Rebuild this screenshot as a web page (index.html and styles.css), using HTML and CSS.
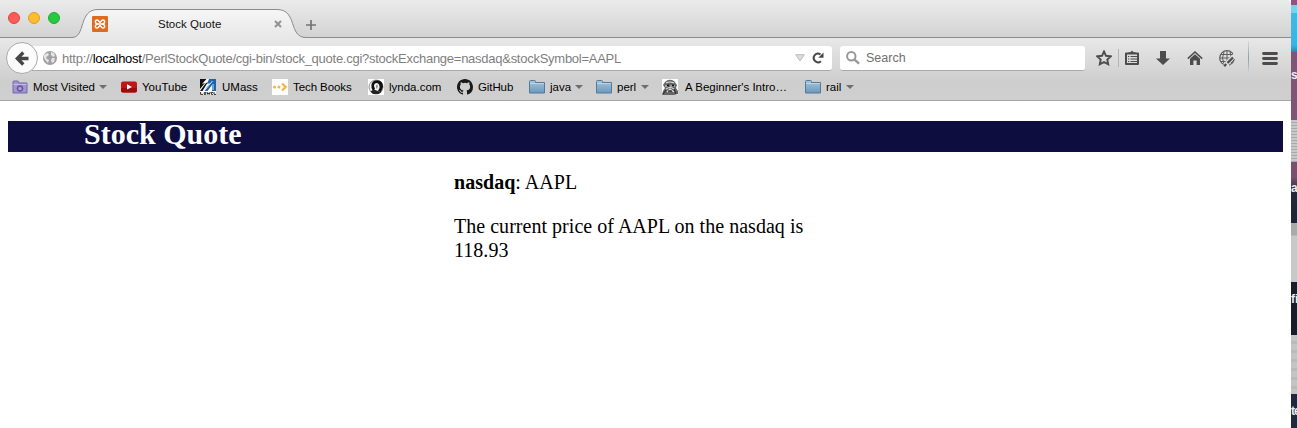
FILE: index.html
```html
<!DOCTYPE html>
<html lang="en">
<head>
<meta charset="utf-8">
<title>Stock Quote</title>
<link rel="stylesheet" href="styles.css">
</head>
<body>
<div class="screen">
<div class="window">
  <header class="tabstrip">
    <div class="lights"><i class="light red"></i><i class="light yellow"></i><i class="light green"></i></div>
    <div class="tab">
      <svg class="tab-shape" width="240" height="30" viewBox="0 0 240 30"><defs><linearGradient id="tg" x2="0" y2="1"><stop stop-color="#f6f6f6"/><stop offset="1" stop-color="#e7e7e7"/></linearGradient></defs><path d="M0 28.5C14 28.5 6 .5 26 .5H205C226 .5 216 28.5 234 28.5V30H0Z" fill="url(#tg)"/><path d="M0 28.5C14 28.5 6 .5 26 .5H205C226 .5 216 28.5 234 28.5" fill="none" stroke="#8c8c8c"/></svg>
      <svg class="favicon" width="16" height="16" viewBox="0 0 16 16"><rect width="16" height="16" rx="1" fill="#df6b20"/><path d="M6.200 8H9.800M6.200 8C2.500 8 2.700 4 5 4 7 4 6.800 6.200 8 6.200S9 4 11 4C13.300 4 13.500 8 9.800 8M6.200 8C2.500 8 2.700 12 5 12 7 12 6.800 9.800 8 9.800S9 12 11 12C13.300 12 13.500 8 9.800 8" fill="none" stroke="#fff" stroke-width="1.500"/></svg>
      <span class="tab-title">Stock Quote</span>
      <svg class="close" width="8" height="8" viewBox="0 0 8 8"><path d="M1 1l6 6M7 1L1 7" stroke="#929292" stroke-width="2"/></svg>
    </div>
    <svg class="plus" width="10" height="10" viewBox="0 0 10 10"><path d="M5 0v10M0 5h10" stroke="#747474" stroke-width="1.7"/></svg>
  </header>
  <div class="toolbars">
    <nav class="navbar">
      <button class="back" aria-label="Back"><svg width="14" height="15" viewBox="0 0 14 15"><path d="M13.5 7.5H2M8.3 1.5l-6 6 6 6" fill="none" stroke="#464646" stroke-width="3.3"/></svg></button>
      <div class="urlbar">
        <svg class="globe" width="14" height="14" viewBox="0 0 14 14"><circle cx="7" cy="7" r="7" fill="#a1a1a1"/><path d="M1 4l3-2 2 1-1 2-2 1 1 2 2 1-1 3-2-2-2-3ZM8 1l3 1 1 3-2 1-2-2ZM9 7l3 0-1 4-2 1-1-3Z" fill="#e5e5e5"/></svg>
        <span class="url">http://<b>localhost</b>/PerlStockQuote/cgi-bin/stock_quote.cgi?stockExchange=nasdaq&amp;stockSymbol=AAPL</span>
        <svg class="drop" width="10" height="8" viewBox="0 0 10 8"><path d="M.7.7h8.6L5 7Z" fill="#ddd" stroke="#bbb"/></svg>
        <svg class="reload" width="12" height="12" viewBox="0 0 12 12"><path d="M8.500 2.400A4.300 4.300 0 1 0 8.900 9.200" fill="none" stroke="#474747" stroke-width="2"/><path d="M11.500 .5v5.200H6.300Z" fill="#474747"/></svg>
      </div>
      <div class="search"><svg width="14" height="14" viewBox="0 0 14 14"><circle cx="5.3" cy="5.3" r="4.2" fill="none" stroke="#989898" stroke-width="2"/><path d="M8.3 8.3l4.7 4.4" stroke="#989898" stroke-width="2.4"/></svg><span>Search</span></div>
      <div class="tools">
        <svg width="16" height="16" viewBox="0 0 16 16"><path d="M8 1.500l2 4.300 4.800.6-3.500 3.200.9 4.700L8 12l-4.200 2.300.9-4.700L1.200 6.400 6 5.800Z" fill="none" stroke="#4c4c4c" stroke-width="1.900"/></svg>
        <i class="sep-small"></i>
        <svg width="14" height="16" viewBox="0 0 14 16"><path d="M1 3.5h12V14H1Z" fill="none" stroke="#4c4c4c" stroke-width="2" stroke-linejoin="round"/><path d="M3.5 4V2.200H5.500L7 .5l1.500 1.700h2V4Z" fill="#4c4c4c"/><path d="M3 6.500h1.300M5.500 6.500H12M3 9h1.300M5.500 9H12M3 11.500h1.300M5.500 11.500H12" stroke="#4c4c4c" stroke-width="1.100"/></svg>
        <svg class="download" width="14" height="14" viewBox="0 0 14 14"><path d="M4 0h6v7.500H14L7 14 0 7.500h4Z" fill="#4c4c4c"/></svg>
        <svg class="home" width="16" height="14" viewBox="0 0 16 14"><path d="M.8 7.600L8 1l7.200 6.600" fill="none" stroke="#4c4c4c" stroke-width="1.500"/><path d="M8 3.300l5 4.500V14H9.600V9.500H6.400V14H3V7.800Z" fill="#4c4c4c"/></svg>
        <svg class="web" width="17" height="17" viewBox="0 0 17 17"><circle cx="8" cy="8" r="7.300" fill="none" stroke="#5d5d5d" stroke-width="1.200"/><path d="M8 1v14M1 8h14M2 4.500h12M2 11.500h12M5 2q-3 6 0 12M11 2q3 6 0 12" fill="none" stroke="#5d5d5d"/><path d="M16.500 5.500L6 16" stroke="#ddd" stroke-width="5.500"/><path d="M14 7.500L8.500 13M7.200 14l-2 2.200" stroke="#4c4c4c" stroke-width="2.300"/><path d="M15.500 9Q14.500 13 10 15.200M15 10l-3 3" fill="none" stroke="#5d5d5d"/></svg>
        <i class="sep-tall"></i>
        <svg class="menu" width="16" height="13" viewBox="0 0 16 13"><path d="M1.500 1.500h13M1.500 6.500h13M1.500 11.500h13" stroke="#4c4c4c" stroke-width="2.800" stroke-linecap="round"/></svg>
      </div>
    </nav>
    <div class="bookmarks">
      <span class="bm"><svg class="ic" viewBox="0 0 16 16"><path d="M1 3q0-1 1-1h4l1 2h8v10H1Z" fill="#a294cf" stroke="#7768ac"/><path d="M1.500 5.500h13" stroke="#c7bce8"/><circle cx="8" cy="9.500" r="2.500" fill="none" stroke="#6758a4" stroke-width="1.300"/><path d="M8 6v7M4.500 9.500h7M5.500 7l5 5M10.500 7l-5 5" stroke="#6758a4" stroke-width=".8"/><circle cx="8" cy="9.500" r="1.500" fill="#b3a6dc"/></svg><span class="t t1">Most Visited</span><i class="arrow"></i></span>
      <span class="bm"><svg class="ic" viewBox="0 0 16 16"><rect y="2.500" width="16" height="11" rx="2" fill="#bd1718"/><path d="M0 9h16v2.500q0 2-2 2H2q-2 0-2-2Z" fill="#a00c0d"/><path d="M6 5.200v5.400L11 8Z" fill="#fff"/></svg><span class="t t2">YouTube</span></span>
      <span class="bm umass"><svg class="ic" viewBox="0 0 16 16"><path fill="#fff" d="M0 0h16v16H0Z"/><path d="M0 0h6.500L2 5l3-1-5 6ZM0 12L5.500 4.500 8 3 2.500 12Z" fill="#111"/><path d="M9 0h7v12h-4V6l-4.500 6H4L10 4l-3 1Z" fill="#1d65ac"/><path d="M4 12.200L12.500 2M13 5v6" fill="none" stroke="#fff" stroke-width=".8"/><path d="M.6 13v2.400H3M4.200 13.600h1.600v1.800H4.200ZM7 13l.8 2.400.8-1.500.8 1.500.8-2.400M13 13.400h-1.600v2H13M14 13v2.400h2" fill="none" stroke="#111" stroke-width=".9"/></svg><span class="t t3">UMass</span></span>
      <span class="bm"><svg class="ic" viewBox="0 0 16 16"><path fill="#fff" d="M0 0h16v16H0Z"/><circle cx="2.500" cy="8" r="1.600" fill="#f8b34d"/><circle cx="7" cy="8" r="1.600" fill="#f8b34d"/><path d="M10 4.500L13.700 8 10 11.500" fill="none" stroke="#f8b34d" stroke-width="2.300"/></svg><span class="t t4">Tech Books</span></span>
      <span class="bm"><svg class="ic" viewBox="0 0 16 16"><path fill="#fff" d="M0 0h16v16H0Z"/><circle cx="8" cy="8" r="7" fill="#f4f4f4" stroke="#777" stroke-width=".8"/><path d="M7 1.500Q15 0 15 8l-2 5-3-1 1.500-3q.5-4-2.500-5Q6 4 6 7l1 3-2 2-1.500-3Q2.500 3 7 1.500Z" fill="#111"/><path d="M2.500 12.500q3-3 6-1l5 1.500-3 2H5Z" fill="#222"/><path d="M8 6q2-1 2 1l-1 3-1-1Z" fill="#999"/></svg><span class="t t5">lynda.com</span></span>
      <span class="bm"><svg class="ic" viewBox="0 0 16 16"><path fill="#191919" d="M8 0C3.580 0 0 3.580 0 8c0 3.540 2.290 6.530 5.470 7.590.4.070.55-.17.55-.38 0-.19-.01-.82-.01-1.490-2.010.37-2.530-.49-2.690-.94-.09-.23-.48-.94-.82-1.130-.28-.15-.68-.52-.01-.53.63-.01 1.080.58 1.230.82.72 1.210 1.870.87 2.330.66.07-.52.28-.87.51-1.070-1.780-.2-3.640-.89-3.640-3.950 0-.87.31-1.590.82-2.150-.08-.2-.36-1.020.08-2.120 0 0 .67-.21 2.200.82a7.600 7.600 0 0 1 4 0c1.530-1.040 2.200-.82 2.200-.82.44 1.100.16 1.920.08 2.120.51.56.82 1.270.82 2.150 0 3.070-1.870 3.750-3.650 3.950.29.25.54.73.54 1.480 0 1.070-.01 1.930-.01 2.200 0 .21.15.46.55.38A8.010 8.010 0 0 0 16 8c0-4.420-3.580-8-8-8Z"/></svg><span class="t t6">GitHub</span></span>
      <span class="bm folder"><svg class="ic" viewBox="0 0 16 16"><defs><linearGradient id="fg" x2="0" y2="1"><stop stop-color="#a8c5dc"/><stop offset="1" stop-color="#6b98bc"/></linearGradient></defs><path d="M.5 2.500q0-1 1-1h4q1 0 1 1v1h9v10.500H.5Z" fill="url(#fg)" stroke="#55799a"/><path d="M1 4.500h14" stroke="#bdd4e6"/></svg><span class="t t7">java</span><i class="arrow"></i></span>
      <span class="bm folder"><svg class="ic" viewBox="0 0 16 16"><path d="M.5 2.500q0-1 1-1h4q1 0 1 1v1h9v10.500H.5Z" fill="url(#fg)" stroke="#55799a"/><path d="M1 4.500h14" stroke="#bdd4e6"/></svg><span class="t t8">perl</span><i class="arrow"></i></span>
      <span class="bm intro"><svg class="ic" viewBox="0 0 16 16"><path fill="#fff" d="M0 0h16v16H0Z"/><path d="M3 3q4-4 9-1l3 4-1 3 2 3v3l-4 1H0l1-4 2-3-2-3Z" fill="#666"/><path d="M4 4q4-2 8 0M3 7h3M8 7h5M4 10q4-3 8 0M5 13l3-3 4 3" fill="none" stroke="#ddd" stroke-width="1.100"/><circle cx="6" cy="6.500" r="1.100" fill="#111"/><circle cx="11" cy="6.500" r="1.100" fill="#111"/><path d="M1 15l3-4M14 15l-2-5M6 12h4" stroke="#222"/></svg><span class="t t9">A Beginner's Intro…</span></span>
      <span class="bm folder"><svg class="ic" viewBox="0 0 16 16"><path d="M.5 2.500q0-1 1-1h4q1 0 1 1v1h9v10.500H.5Z" fill="url(#fg)" stroke="#55799a"/><path d="M1 4.500h14" stroke="#bdd4e6"/></svg><span class="t t10">rail</span><i class="arrow"></i></span>
    </div>
  </div>
  <main class="page">
    <h1>Stock Quote</h1>
    <div class="quote">
      <p><strong>nasdaq</strong>: AAPL</p>
      <p>The current price of AAPL on the nasdaq is<br>118.93</p>
    </div>
  </main>
</div>
<aside class="desktop">
  <div class="d1"></div><div class="d2"></div><div class="d3">s</div><div class="d4"></div><div class="d5">a</div><div class="d6"></div><div class="d7">fi</div><div class="d8"></div><div class="d9">te</div>
</aside>
</div>
</body>
</html>
```
FILE: styles.css
```css
* { box-sizing: border-box; }
body { margin: 0; overflow: hidden; background: #fff; }
svg { display: block; flex: none; }
.screen { display: flex; width: 1297px; height: 428px; }
.window { flex: none; width: 1291px; height: 428px; background: #fff; font-family: "Liberation Sans", Arial, sans-serif; }
.tabstrip { display: flex; height: 38px; background: linear-gradient(#ebebeb, #d3d3d3); border-bottom: 1px solid #8c8c8c; border-radius: 0 4px 0 0; }
.lights { display: flex; gap: 8px; padding: 12px 0 0 8px; width: 72px; }
.light { width: 12px; height: 12px; border-radius: 50%; flex: none; }
.red { background: #fc5b57; border: 1px solid #e2443f; }
.yellow { background: #fdbc2e; border: 1px solid #dfa023; }
.green { background: #28c840; border: 1px solid #1ead2f; }
.tab { position: relative; display: flex; width: 233px; height: 30px; margin-top: 9px; padding-left: 20px; }
.tab-shape { position: absolute; left: 0; top: 0; }
.favicon { position: relative; margin-top: 7px; }
.tab-title { position: relative; width: 66px; margin: 8px 0 0 50px; font-size: 11.5px; line-height: 14px; white-space: nowrap; color: #111; }
.close { position: relative; margin: 11px 0 0 50px; }
.plus { position: relative; margin: 20px 0 0 1px; }
.toolbars { height: 63px; background: linear-gradient(#e8e8e8, #cecece 70%, #cfcfcf); border-bottom: 1px solid #a5a5a5; }
.navbar { display: flex; height: 38px; padding: 0 0 0 6px; }
.back { position: relative; display: flex; align-items: center; justify-content: center; flex: none; width: 32px; height: 32px; margin: 4px -6px 0 0; padding: 0; border: 1px solid #aaa; border-radius: 50%; background: #fbfbfb; }
.urlbar, .search { display: flex; align-items: center; height: 25px; margin-top: 8px; background: #fff; border-bottom: 1px solid #aaa; border-radius: 0 3px 3px 0; flex: none; font-size: 12.5px; }
.urlbar { width: 800px; padding-left: 11px; color: #7f7f7f; }
.url { width: 560px; margin-left: 5px; white-space: nowrap; font-size: 13px; letter-spacing: -.26px; }
.url b { font-weight: 400; color: #000; }
.drop { margin-left: 173px; }
.reload { margin-left: 7px; }
.search { width: 245px; margin-left: 8px; padding-left: 6px; border-radius: 3px; color: #707070; gap: 6px; }
.tools { display: flex; align-items: center; height: 40px; padding-left: 11px; }
.sep-small { width: 1px; height: 18px; margin: 0 6px; background: #b5b5b5; }
.download { margin-left: 17px; }
.home { margin-left: 17px; }
.web { margin-left: 16px; }
.sep-tall { width: 1px; height: 34px; margin-left: 12px; background: linear-gradient(#d6dadd, #8d9da9, #d6dadd); }
.menu { margin-left: 13px; }
.bookmarks { display: grid; grid-template-columns: 109px 79px 72px 96px 89px 72px 67px 66px 143px 60px; height: 22px; padding-left: 12px; font-size: 11.5px; line-height: 14px; color: #000; }
.bm { display: flex; align-items: center; }
.ic { width: 16px; height: 16px; }
.t { margin-left: 5px; white-space: nowrap; }
.umass .t { margin-left: 6px; }
.intro .t { margin-left: 7px; }
.t1 { width: 61px; letter-spacing: -.05px; }
.t4 { letter-spacing: -.08px; }
.t6 { letter-spacing: -.1px; }
.t7 { width: 20px; }
.t8 { width: 19px; }
.t10 { width: 15px; }
.arrow { margin-left: 5px; border: solid transparent; border-width: 4px 4px 0; border-top-color: #6e6e6e; }
.page { padding: 20px 8px 0; font-family: "Liberation Serif", "Times New Roman", serif; color: #000; }
h1 { height: 31px; margin: 0; padding-left: 76px; background: #0d0d40; color: #fff; font-size: 30px; line-height: 25px; }
.quote { width: 380px; margin-left: 446px; padding-top: 18px; font-size: 20px; line-height: 24px; letter-spacing: .03px; }
.quote p { margin: 0 0 20px; white-space: nowrap; }
.desktop { display: flex; flex-direction: column; width: 6px; overflow: hidden; color: #eee; font: bold 12px/14px "Liberation Sans", sans-serif; box-shadow: inset 1px 0 #6665; }
.desktop div { flex: none; overflow: hidden; }
.d1 { height: 5px; background: #90557e; }
.d2 { height: 47px; background: linear-gradient(#79d3ed 8px, #42b9e1 8px, #39b4e1 85%, #2b87ab); }
.d3 { height: 68px; padding-top: 16px; background: #805476; }
.d4 { height: 42px; background: repeating-linear-gradient(#c8c8c8 0 2px, #aaa 2px 3px); }
.d5 { height: 61px; padding-top: 19px; background: linear-gradient(#7b506f 15px, #28283b 30px, #202237); }
.d6 { height: 59px; background: linear-gradient(#aaa 12px, #c8c8c8 13px); }
.d7 { height: 53px; padding-top: 10px; background: #1b1c2b; }
.d8 { height: 59px; background: repeating-linear-gradient(#c4c4c4 0 6px, #bababa 6px 9px); }
.d9 { height: 34px; padding-top: 10px; background: #23273e; letter-spacing: -1px; }
```
